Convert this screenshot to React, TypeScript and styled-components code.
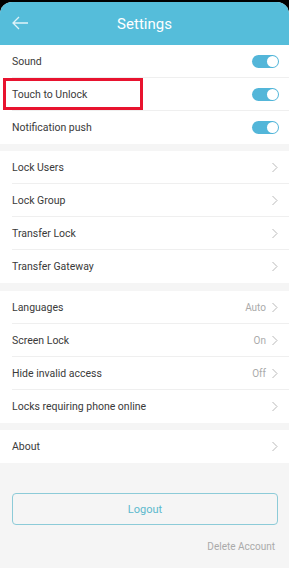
import styled, { createGlobalStyle } from "styled-components";

const GlobalStyle = createGlobalStyle`
	html, body {
		margin: 0;
		padding: 0;
		background: #000;
	}
	body {
		font-family: Roboto, "Liberation Sans", sans-serif;
		-webkit-font-smoothing: antialiased;
	}
`;

const Screen = styled.div`
	width: 289px;
	height: 568px;
	padding-top: 2px;
	box-sizing: border-box;
	background: #000;
	overflow: hidden;
`;

const Page = styled.div`
	height: 566px;
	background: #f5f5f5;
	border-radius: 12px 12px 0 0;
	overflow: hidden;
	display: flex;
	flex-direction: column;
`;

const Header = styled.header`
	height: 43px;
	flex-shrink: 0;
	background: #55bdda;
	display: flex;
	align-items: center;
	justify-content: center;
	position: relative;
	color: #fff;
	font-size: 15px;
`;

const BackButton = styled.button`
	position: absolute;
	left: 10px;
	top: 11px;
	width: 20px;
	height: 20px;
	padding: 0;
	border: none;
	background: none;
	display: flex;
	align-items: center;
	justify-content: center;
`;

const Group = styled.section<{ $gap?: number }>`
	background: #fff;
	margin-top: ${({ $gap }) => $gap ?? 0}px;
	padding-left: 12px;
	flex-shrink: 0;
`;

const Row = styled.div<{ $last?: boolean }>`
	height: 33px;
	box-sizing: border-box;
	display: flex;
	align-items: center;
	padding-right: 11px;
	border-bottom: ${({ $last }) => ($last ? "none" : "1px solid #efefef")};
	position: relative;
`;

const Label = styled.span`
	flex: 1;
	font-size: 10.5px;
	color: #3a3a3a;
`;

const Value = styled.span`
	font-size: 10px;
	color: #aaa;
	margin-right: 5px;
`;

const Toggle = styled.span`
	width: 27px;
	height: 13px;
	border-radius: 7px;
	background: #53b6d9;
	position: relative;
	margin-right: -1px;

	&::after {
		content: "";
		position: absolute;
		right: 1px;
		top: 1px;
		width: 11px;
		height: 11px;
		border-radius: 50%;
		background: #fff;
	}
`;

const Highlight = styled.div`
	position: absolute;
	left: -9px;
	top: 0px;
	width: 140px;
	height: 32px;
	box-sizing: border-box;
	border: 3px solid #e8132f;
	pointer-events: none;
`;

const Footer = styled.div`
	padding: 30px 11px 0 12px;
	display: flex;
	flex-direction: column;
	align-items: flex-end;
`;

const LogoutButton = styled.button`
	width: 100%;
	height: 32px;
	border: 1px solid #8ccbd8;
	border-radius: 4px;
	background: transparent;
	color: #5cb9cd;
	font-family: inherit;
	font-size: 11px;
`;

const DeleteLink = styled.span`
	margin-top: 16px;
	margin-right: 3px;
	font-size: 10px;
	color: #aaa;
`;

const Chevron = () => (
	<svg width="7" height="11" viewBox="0 0 7 11">
		<path d="M1.5 1l4.5 4.5-4.5 4.5" fill="none" stroke="#b9b9b9" strokeWidth="1" />
	</svg>
);

const BackArrow = () => (
	<svg width="18" height="14" viewBox="0 0 18 14">
		<path d="M17 7H2M8 1L2 7l6 6" fill="none" stroke="#dff3f9" strokeWidth="1.3" />
	</svg>
);

const toggles = ["Sound", "Touch to Unlock", "Notification push"];
const locks = ["Lock Users", "Lock Group", "Transfer Lock", "Transfer Gateway"];
const prefs: [string, string?][] = [
	["Languages", "Auto"],
	["Screen Lock", "On"],
	["Hide invalid access", "Off"],
	["Locks requiring phone online"],
];

export default function App() {
	return (
		<Screen>
			<GlobalStyle />
			<Page>
				<Header>
					<BackButton>
						<BackArrow />
					</BackButton>
					Settings
				</Header>
				<Group>
					{toggles.map((t, i) => (
						<Row key={t} $last={i === toggles.length - 1}>
							<Label>{t}</Label>
							<Toggle />
							{t === "Touch to Unlock" && <Highlight />}
						</Row>
					))}
				</Group>
				<Group $gap={7}>
					{locks.map((t, i) => (
						<Row key={t} $last={i === locks.length - 1}>
							<Label>{t}</Label>
							<Chevron />
						</Row>
					))}
				</Group>
				<Group $gap={8}>
					{prefs.map(([t, v], i) => (
						<Row key={t} $last={i === prefs.length - 1}>
							<Label>{t}</Label>
							{v && <Value>{v}</Value>}
							<Chevron />
						</Row>
					))}
				</Group>
				<Group $gap={7}>
					<Row $last>
						<Label>About</Label>
						<Chevron />
					</Row>
				</Group>
				<Footer>
					<LogoutButton>Logout</LogoutButton>
					<DeleteLink>Delete Account</DeleteLink>
				</Footer>
			</Page>
		</Screen>
	);
}
